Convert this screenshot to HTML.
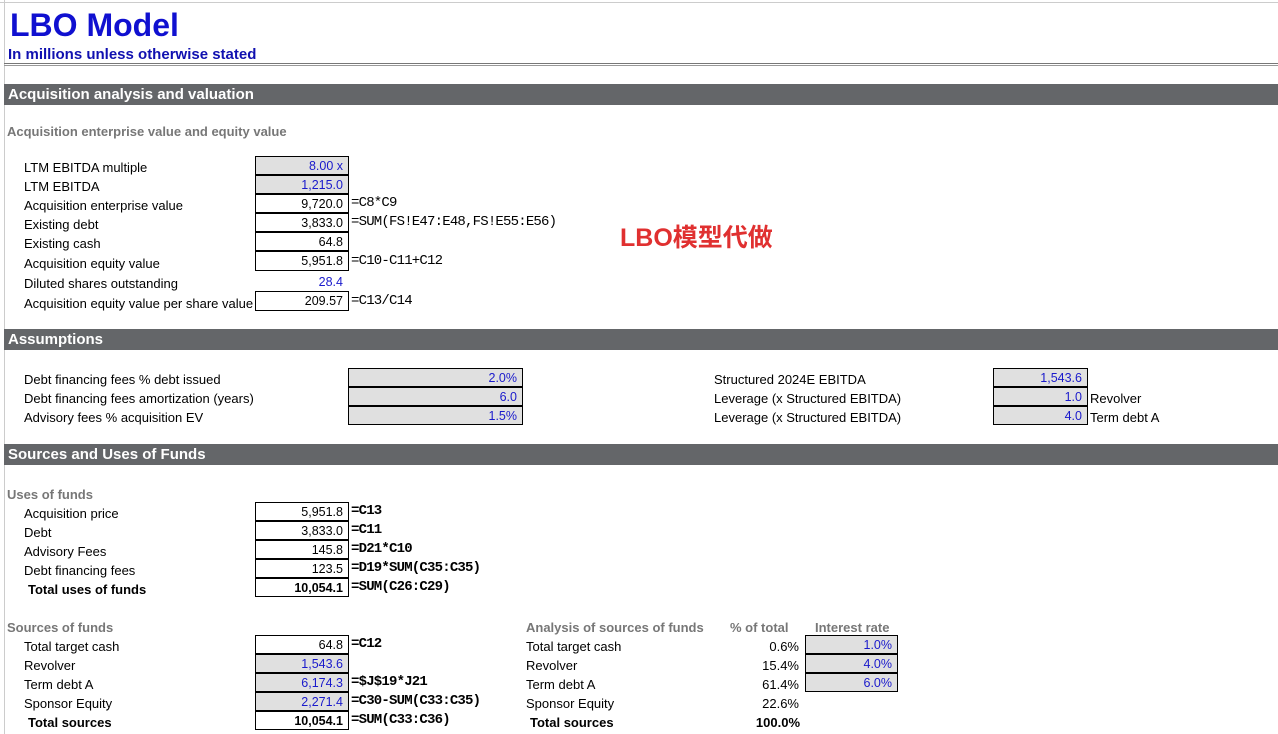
<!DOCTYPE html>
<html><head><meta charset="utf-8"><style>
body{margin:0;width:1278px;height:734px;background:#fff;position:relative;overflow:hidden;font-family:"Liberation Sans","Noto Sans CJK SC",sans-serif;font-size:13px;color:#000}
.a{position:absolute;white-space:nowrap;line-height:19px}
.bar{position:absolute;left:4px;width:1274px;height:21px;background:#646669;color:#fff;font-weight:bold;font-size:15px;line-height:21px;padding-left:4px;box-sizing:border-box}
.box{position:absolute;height:19px;border:1px solid #000;box-sizing:border-box;text-align:right;padding-right:5px;line-height:18px;font-size:12.5px}
.g{background:#e0e0e0}.bl{color:#1a1acc}
.f{position:absolute;font-family:"Liberation Mono","Noto Serif CJK SC",serif;font-size:14px;line-height:19px;white-space:nowrap;letter-spacing:-0.8px}
.fb{font-weight:bold}
.sub{position:absolute;color:#777;font-weight:bold;font-size:13px;line-height:19px}
</style></head><body>
<div style="position:absolute;left:0;top:2px;width:1278px;height:1px;background:#ccc"></div>
<div style="position:absolute;left:4px;top:0;width:1px;height:734px;background:#ccc"></div>
<div style="position:absolute;left:4px;top:63px;width:1274px;height:3px;border-top:1px solid #777;border-bottom:1px solid #999;box-sizing:border-box"></div>
<div class="a" style="left:10px;top:5px;font-size:32px;line-height:40px;font-weight:bold;color:#1010d0">LBO Model</div>
<div class="a" style="left:8px;top:45px;font-size:15px;font-weight:bold;color:#1010b0">In millions unless otherwise stated</div>

<div class="bar" style="top:84px">Acquisition analysis and valuation</div>
<div class="sub" style="left:7px;top:122px">Acquisition enterprise value and equity value</div>
<div class="a" style="left:24px;top:158px">LTM EBITDA multiple</div>
<div class="a" style="left:24px;top:177px">LTM EBITDA</div>
<div class="a" style="left:24px;top:196px">Acquisition enterprise value</div>
<div class="a" style="left:24px;top:215px">Existing debt</div>
<div class="a" style="left:24px;top:234px">Existing cash</div>
<div class="a" style="left:24px;top:254px">Acquisition equity value</div>
<div class="a" style="left:24px;top:274px">Diluted shares outstanding</div>
<div class="a" style="left:24px;top:294px">Acquisition equity value per share value</div>
<div class="box g bl" style="left:255px;top:156px;width:94px">8.00 x</div>
<div class="box g bl" style="left:255px;top:175px;width:94px">1,215.0</div>
<div class="box" style="left:255px;top:194px;width:94px">9,720.0</div>
<div class="box" style="left:255px;top:213px;width:94px">3,833.0</div>
<div class="box" style="left:255px;top:232px;width:94px">64.8</div>
<div class="box" style="left:255px;top:251px;width:94px;height:20px">5,951.8</div>
<div class="box bl" style="left:255px;top:272px;width:94px;border-color:transparent">28.4</div>
<div class="box" style="left:255px;top:291px;width:94px;height:20px">209.57</div>
<div class="f" style="left:351px;top:194px">=C8*C9</div>
<div class="f" style="left:351px;top:213px">=SUM(FS!E47:E48,FS!E55:E56)</div>
<div class="f" style="left:351px;top:252px">=C10-C11+C12</div>
<div class="f" style="left:351px;top:292px">=C13/C14</div>
<div class="a" style="left:620px;top:222px;font-size:25px;line-height:32px;color:#e03030;font-weight:bold">LBO模型代做</div>

<div class="bar" style="top:329px">Assumptions</div>
<div class="a" style="left:24px;top:370px">Debt financing fees % debt issued</div>
<div class="a" style="left:24px;top:389px">Debt financing fees amortization (years)</div>
<div class="a" style="left:24px;top:408px">Advisory fees % acquisition EV</div>
<div class="box g bl" style="left:348px;top:368px;width:175px">2.0%</div>
<div class="box g bl" style="left:348px;top:387px;width:175px">6.0</div>
<div class="box g bl" style="left:348px;top:406px;width:175px">1.5%</div>
<div class="a" style="left:714px;top:370px">Structured 2024E EBITDA</div>
<div class="a" style="left:714px;top:389px">Leverage (x Structured EBITDA)</div>
<div class="a" style="left:714px;top:408px">Leverage (x Structured EBITDA)</div>
<div class="box g bl" style="left:993px;top:368px;width:95px">1,543.6</div>
<div class="box g bl" style="left:993px;top:387px;width:95px">1.0</div>
<div class="box g bl" style="left:993px;top:406px;width:95px">4.0</div>
<div class="a" style="left:1090px;top:389px">Revolver</div>
<div class="a" style="left:1090px;top:408px">Term debt A</div>

<div class="bar" style="top:444px">Sources and Uses of Funds</div>
<div class="sub" style="left:7px;top:485px">Uses of funds</div>
<div class="a" style="left:24px;top:504px">Acquisition price</div>
<div class="a" style="left:24px;top:523px">Debt</div>
<div class="a" style="left:24px;top:542px">Advisory Fees</div>
<div class="a" style="left:24px;top:561px">Debt financing fees</div>
<div class="a fb" style="left:28px;top:580px">Total uses of funds</div>
<div class="box" style="left:255px;top:502px;width:94px">5,951.8</div>
<div class="box" style="left:255px;top:521px;width:94px">3,833.0</div>
<div class="box" style="left:255px;top:540px;width:94px">145.8</div>
<div class="box" style="left:255px;top:559px;width:94px">123.5</div>
<div class="box fb" style="left:255px;top:578px;width:94px">10,054.1</div>
<div class="f fb" style="left:351px;top:502px">=C13</div>
<div class="f fb" style="left:351px;top:521px">=C11</div>
<div class="f fb" style="left:351px;top:540px">=D21*C10</div>
<div class="f fb" style="left:351px;top:559px">=D19*SUM(C35:C35)</div>
<div class="f fb" style="left:351px;top:578px">=SUM(C26:C29)</div>

<div class="sub" style="left:7px;top:618px">Sources of funds</div>
<div class="a" style="left:24px;top:637px">Total target cash</div>
<div class="a" style="left:24px;top:656px">Revolver</div>
<div class="a" style="left:24px;top:675px">Term debt A</div>
<div class="a" style="left:24px;top:694px">Sponsor Equity</div>
<div class="a fb" style="left:28px;top:713px">Total sources</div>
<div class="box" style="left:255px;top:635px;width:94px">64.8</div>
<div class="box g bl" style="left:255px;top:654px;width:94px">1,543.6</div>
<div class="box g bl" style="left:255px;top:673px;width:94px">6,174.3</div>
<div class="box g bl" style="left:255px;top:692px;width:94px">2,271.4</div>
<div class="box fb" style="left:255px;top:711px;width:94px">10,054.1</div>
<div class="f fb" style="left:351px;top:635px">=C12</div>
<div class="f fb" style="left:351px;top:673px">=$J$19*J21</div>
<div class="f fb" style="left:351px;top:692px">=C30-SUM(C33:C35)</div>
<div class="f fb" style="left:351px;top:711px">=SUM(C33:C36)</div>

<div class="sub" style="left:526px;top:618px">Analysis of sources of funds</div>
<div class="sub" style="left:730px;top:618px">% of total</div>
<div class="sub" style="left:815px;top:618px">Interest rate</div>
<div class="a" style="left:526px;top:637px">Total target cash</div>
<div class="a" style="left:526px;top:656px">Revolver</div>
<div class="a" style="left:526px;top:675px">Term debt A</div>
<div class="a" style="left:526px;top:694px">Sponsor Equity</div>
<div class="a fb" style="left:530px;top:713px">Total sources</div>
<div class="a" style="right:479px;top:637px">0.6%</div>
<div class="a" style="right:479px;top:656px">15.4%</div>
<div class="a" style="right:479px;top:675px">61.4%</div>
<div class="a" style="right:479px;top:694px">22.6%</div>
<div class="a fb" style="right:478px;top:713px">100.0%</div>
<div class="box g bl" style="left:805px;top:635px;width:93px">1.0%</div>
<div class="box g bl" style="left:805px;top:654px;width:93px">4.0%</div>
<div class="box g bl" style="left:805px;top:673px;width:93px">6.0%</div>
</body></html>
